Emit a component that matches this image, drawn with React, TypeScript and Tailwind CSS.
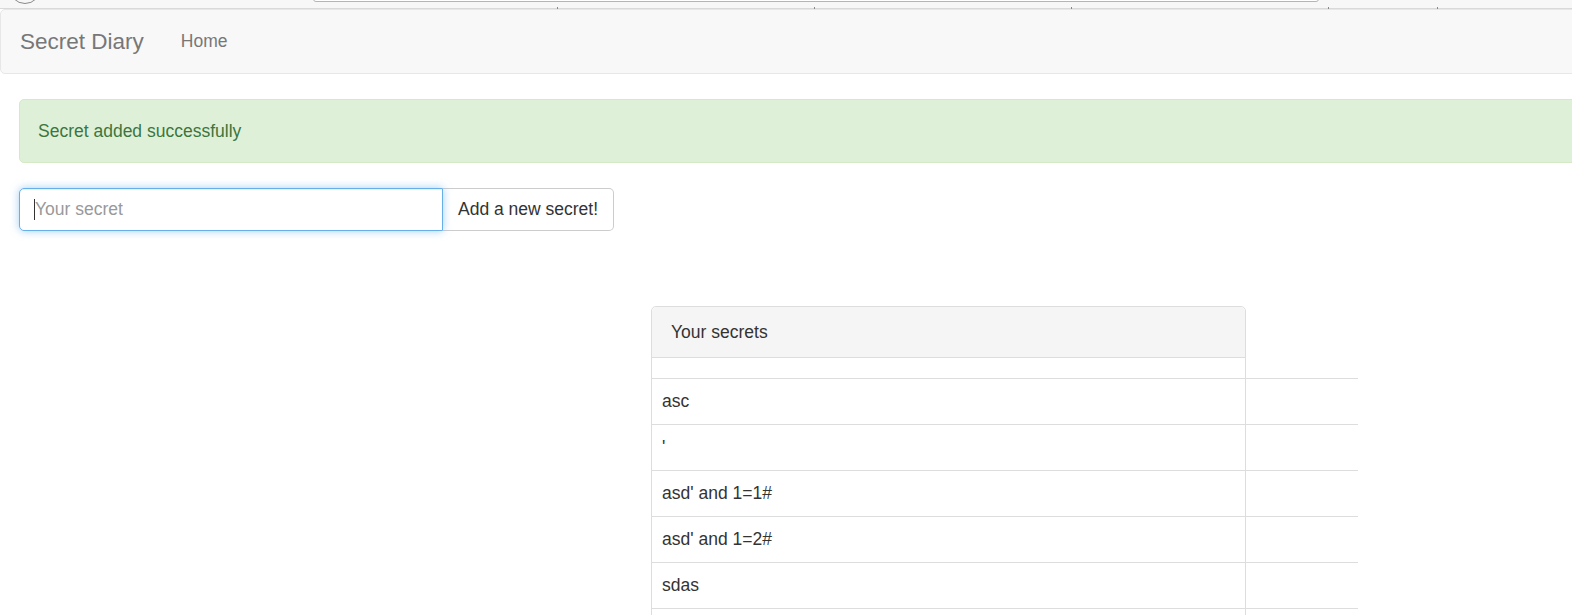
import React from "react";

const rows = ["asc", "'", "asd' and 1=1#", "asd' and 1=2#", "sdas", ""];

export default function App() {
  return (
    <div
      className="relative w-full h-[615px] overflow-hidden bg-white text-[#333]"
      style={{ fontFamily: '"Liberation Sans", Arial, sans-serif' }}
    >
      {/* browser chrome remnant */}
      <div className="relative h-[9px] bg-[#f7f7f7] border-b border-[#d9d9d9]">
        <div className="absolute left-[9px] top-[-28px] w-[32px] h-[32px] rounded-full border border-[#8a8a8a] bg-[#f7f7f7]" />
        <div className="absolute left-[313px] top-[-10px] w-[1006px] h-[12px] rounded-[3px] border border-[#b5b5b5] bg-white" />
        <div className="absolute left-[557px] bottom-[-1px] w-px h-[2px] bg-[#888]" />
        <div className="absolute left-[814px] bottom-[-1px] w-px h-[2px] bg-[#888]" />
        <div className="absolute left-[1071px] bottom-[-1px] w-px h-[2px] bg-[#888]" />
        <div className="absolute left-[1328px] bottom-[-1px] w-px h-[2px] bg-[#888]" />
        <div className="absolute left-[1437px] bottom-[-1px] w-px h-[2px] bg-[#888]" />
      </div>

      {/* navbar */}
      <div className="w-[1620px] h-[65px] bg-[#f8f8f8] border border-[#e7e7e7] rounded-[5px] flex items-center">
        <span className="pl-[19px] pr-[19px] text-[22.5px] text-[#777] leading-[25px]">Secret Diary</span>
        <span className="px-[18px] text-[17.5px] text-[#777] leading-[25px]">Home</span>
      </div>

      <div className="pl-[19px] pt-[25px]">
        {/* alert */}
        <div className="w-[1600px] h-[64px] bg-[#dff0d8] border border-[#d6e9c6] rounded-[5px] flex items-center pl-[18px] text-[17.5px] text-[#3c763d]">
          Secret added successfully
        </div>

        {/* form */}
        <div className="mt-[25px] flex">
          <div className="relative">
            <input
              className="w-[424px] h-[43px] border border-[#66afe9] rounded-l-[5px] px-[15px] text-[17.5px] text-[#555] outline-none placeholder:text-[#999] shadow-[inset_0_1px_1px_rgba(0,0,0,0.075),0_0_8px_rgba(102,175,233,0.6)]"
              placeholder="Your secret"
              style={{ fontFamily: '"Liberation Sans", Arial, sans-serif' }}
            />
            <span className="absolute left-[15px] top-[11px] w-px h-[21px] bg-[#333]" />
          </div>
          <button
            className="h-[43px] border border-l-0 border-[#ccc] rounded-r-[5px] pl-[15px] pr-[15px] text-[17.5px] text-[#333] bg-white"
            style={{ fontFamily: '"Liberation Sans", Arial, sans-serif' }}
          >
            Add a new secret!
          </button>
        </div>

        {/* panel */}
        <div className="mt-[75px] ml-[632px] w-[595px] border border-[#ddd] rounded-[5px] bg-white">
          <div className="h-[51px] bg-[#f5f5f5] border-b border-[#ddd] rounded-t-[5px] flex items-center pl-[19px] text-[17.5px] text-[#333]">
            Your secrets
          </div>
          <div className="w-[706px]">
            <div className="h-[20px]" />
            {rows.map((r, i) => (
              <div
                key={i}
                className="h-[46px] border-t border-[#ddd] flex items-center pl-[10px] text-[17.5px] text-[#333]"
              >
                {r}
              </div>
            ))}
          </div>
        </div>
      </div>
    </div>
  );
}
